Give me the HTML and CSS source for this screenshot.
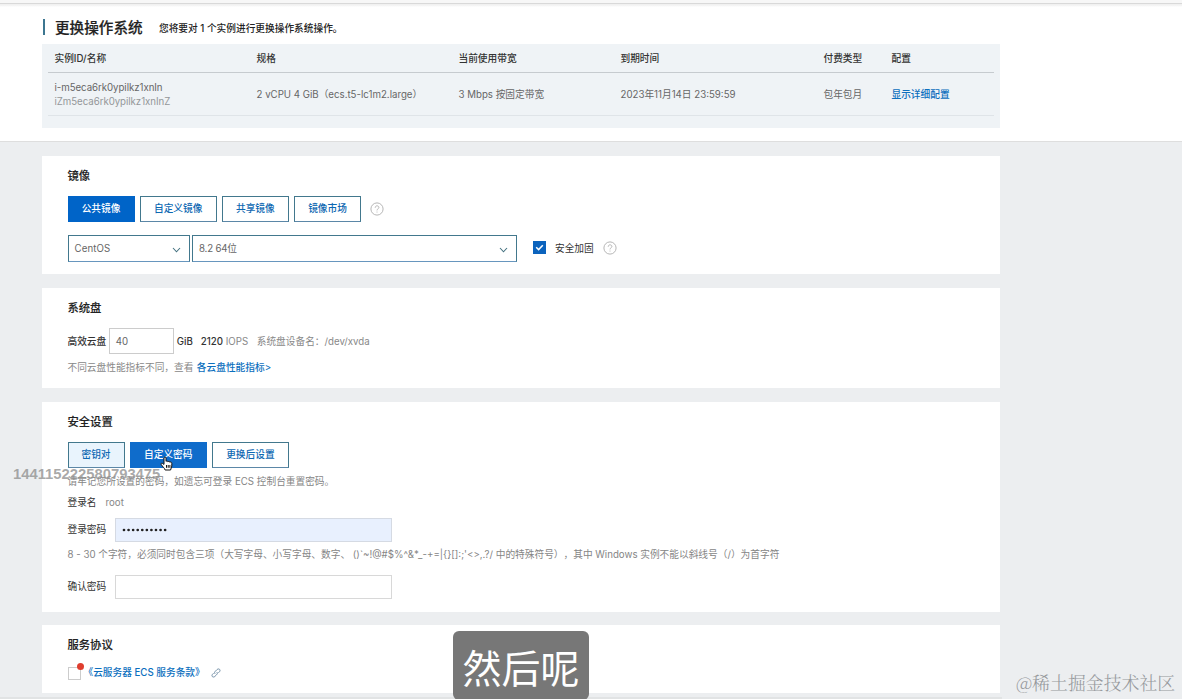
FILE: index.html
```html
<!DOCTYPE html>
<html lang="zh-CN">
<head>
<meta charset="utf-8">
<title>更换操作系统</title>
<link rel="stylesheet" href="styles.css">
</head>
<body>
<header class="top">
  <div class="heading"><h1>更换操作系统</h1><p class="sub">您将要对 1 个实例进行更换操作系统操作。</p></div>
  <div class="summary">
    <div class="cols thead"><span>实例ID/名称</span><span>规格</span><span>当前使用带宽</span><span>到期时间</span><span>付费类型</span><span>配置</span></div>
    <div class="cols tbody">
      <div class="ids"><div>i-m5eca6rk0ypilkz1xnIn</div><div class="muted">iZm5eca6rk0ypilkz1xnInZ</div></div>
      <span class="spec">2 vCPU 4 GiB（ecs.t5-lc1m2.large）</span><span>3 Mbps 按固定带宽</span><span class="date">2023年11月14日 23:59:59</span><span>包年包月</span><a class="link">显示详细配置</a>
    </div>
  </div>
</header>
<main class="cards">
  <section class="card image-card">
    <h2>镜像</h2>
    <div class="buttons">
      <button class="btn w67 active">公共镜像</button><button class="btn w77">自定义镜像</button><button class="btn w67">共享镜像</button><button class="btn w67">镜像市场</button>
      <svg class="help" viewBox="0 0 14 14"><circle cx="7" cy="7" r="6.1"/><path d="M5.2 5.7C5.2 3.2 8.9 3.3 8.9 5.5C8.9 6.8 7 6.8 7 8.4M7 9.6V10.5"/></svg>
    </div>
    <div class="selects">
      <div class="select os"><span>CentOS</span><svg class="chev" viewBox="0 0 9 6"><path d="M1 1L4.5 4.8L8 1"/></svg></div>
      <div class="select version"><span>8.2 64位</span><svg class="chev" viewBox="0 0 9 6"><path d="M1 1L4.5 4.8L8 1"/></svg></div>
      <svg class="checked" viewBox="0 0 13 13"><rect width="13" height="13"/><path d="M3.2 6.3L5.6 8.6L9.8 4.2"/></svg>
      <span class="harden">安全加固</span>
      <svg class="help" viewBox="0 0 14 14"><circle cx="7" cy="7" r="6.1"/><path d="M5.2 5.7C5.2 3.2 8.9 3.3 8.9 5.5C8.9 6.8 7 6.8 7 8.4M7 9.6V10.5"/></svg>
    </div>
  </section>
  <section class="card disk-card">
    <h2>系统盘</h2>
    <div class="disk"><span class="dark">高效云盘</span><div class="size">40</div><span class="dark gib">GiB</span><span class="dark iops">2120</span><span class="iops-unit">IOPS</span><span class="device">系统盘设备名：/dev/xvda</span></div>
    <div class="disk-note">不同云盘性能指标不同，查看 <a class="link">各云盘性能指标&gt;</a></div>
  </section>
  <section class="card security-card">
    <h2>安全设置</h2>
    <div class="buttons">
      <button class="btn w57 pale">密钥对</button><button class="btn w77 hover">自定义密码</button><button class="btn w77">更换后设置</button>
    </div>
    <p class="remember">请牢记您所设置的密码，如遗忘可登录 ECS 控制台重置密码。</p>
    <div class="login"><span class="dark">登录名</span><span>root</span></div>
    <div class="field"><span class="dark">登录密码</span><div class="input filled"><svg class="dots" viewBox="0 0 45 4"><path d="M2 2H44"/></svg></div></div>
    <p class="rule">8 - 30 个字符，必须同时包含三项（大写字母、小写字母、数字、 <span class="symbols">()`~!@#$%^&amp;*_-+=|{}[]:;'&lt;&gt;,.?/</span> 中的特殊符号），其中 Windows 实例不能以斜线号（/）为首字符</p>
    <div class="field"><span class="dark">确认密码</span><div class="input"></div></div>
  </section>
  <section class="card terms-card">
    <h2>服务协议</h2>
    <div class="agree"><span class="box"><i class="badge"></i></span><a class="link">《云服务器 ECS 服务条款》</a>
      <svg class="chain" viewBox="0 0 10 10"><path d="M4.2 5.9C3.1 4.8 3.5 4.1 4.5 3.1L6.1 1.5C8-.1 10 2 8.5 3.7L7.4 4.8M5.7 4.1C6.8 5.2 6.5 5.8 5.5 6.8L3.9 8.4C2 10.1 0 8 1.5 6.3L2.6 5.2"/></svg>
    </div>
  </section>
</main>
<div class="bottom-line"></div>
<div class="stamp">144115222580793475</div>
<svg class="cursor" viewBox="0 0 13 15"><path d="M4 8V2.1C4 .6 6 .6 6 2.1V5.4C6.5 4.7 7.7 4.9 7.9 5.8C8.5 5.2 9.6 5.4 9.8 6.2C10.7 5.7 11.8 6.2 11.8 7.3V10C11.8 11.7 10.6 12.3 10.6 14H5.1C4.6 12 2.5 10.7 1.2 8.5C.6 7.3 2 6.7 2.8 7.5L4 8.8"/><path d="M6.5 9V11.8M8.2 9V11.8M9.9 9V11.8"/></svg>
<div class="caption">然后呢</div>
<div class="community">@稀土掘金技术社区</div>
</body>
</html>
```
FILE: styles.css
```css
* { box-sizing: border-box; }
body { margin: 0; width: 1182px; height: 699px; overflow: hidden; position: relative; background: #eceef0; font: 9.7px/14px Inter, "Noto Sans CJK SC", sans-serif; color: #666; text-spacing-trim: space-all; }
h1, h2, p { margin: 0; }
.top { height: 142px; padding: 15px 0 0 42px; background: linear-gradient(#f7f7f7 0 3px, #d9d9d9 3px 4px, #f1f1f1 4px 5px, #fff 7px); border-bottom: 1px solid #dedede; }
.heading { display: flex; align-items: center; height: 24px; padding-left: 1px; }
h1 { font: 500 14.6px/16px "Noto Sans CJK SC", sans-serif; color: #222; border-left: 2px solid #3c7690; padding-left: 10px; width: 116px; white-space: nowrap; -webkit-text-stroke: .2px #222; }
.sub { color: #222; font-weight: 500; padding-top: 4px; white-space: nowrap; }
.summary { width: 958px; height: 84px; margin-top: 5px; padding: 0 6px; background: #eff3f6; }
.cols { display: grid; grid-template-columns: 202px 202px 162px 203px 68px 100px; align-items: center; padding-left: 6.5px; white-space: nowrap; }
.thead { height: 29px; padding-top: 2px; border-bottom: 1px solid #c6cbcf; font-weight: 500; color: #333; }
.tbody { height: 43px; padding-top: 1px; border-bottom: 1px solid #dfe4e8; }
.muted { color: #949799; }
.link { color: #0c6fbe; font-weight: 500; }
.ids { letter-spacing: -.05px; }
.cards { display: flex; flex-direction: column; gap: 13px; padding: 14px 0 0 42px; }
.card { width: 958px; background: #fff; padding: 12px 0 0 25.5px; white-space: nowrap; }
h2 { font: 500 11.3px/16px Inter, "Noto Sans CJK SC", sans-serif; color: #222; -webkit-text-stroke: .15px #222; }
.image-card { height: 118px; margin-bottom: 1px; }
.disk-card { height: 100px; margin-bottom: 1px; }
.security-card { height: 210px; }
.terms-card { height: 68px; }
.buttons { display: flex; align-items: flex-start; gap: 5.2px; margin-top: 12px; height: 27px; }
.btn { height: 26px; padding: 0; border: 1px solid #42788d; border-bottom-color: #5b87a7; background: #fff; color: #0e68b2; font: 500 9.7px/14px Inter, "Noto Sans CJK SC", sans-serif; }
.w57 { width: 57px; } .w67 { width: 67px; } .w77 { width: 77px; }
.active { background: #0064c8; border-color: #0064c8; color: #fff; }
.hover { background: #0f6ccb; border-color: #0f6ccb; color: #fff; }
.pale { background: #e9f4fd; }
.help { width: 14px; height: 14px; fill: none; stroke: #b6b6b6; stroke-width: 1; }
.buttons .help { margin: 6px 0 0 4px; }
.selects { display: flex; align-items: center; height: 27px; margin-top: 12px; }
.selects .help, .selects .checked { margin-bottom: 2px; }
.select { display: flex; align-items: center; justify-content: space-between; height: 27px; padding: 0 8px 0 6px; border: 1px solid #42788d; border-bottom-color: #6796be; }
.os { width: 122px; margin-right: 2.5px; letter-spacing: .1px; }
.version { width: 325px; padding-right: 8px; letter-spacing: -.2px; }
.chev { width: 9px; height: 6px; fill: none; stroke: #457281; stroke-width: 1.1; margin-top: 3px; }
.checked { width: 13px; height: 13px; fill: #0b63bd; margin-left: 16px; }
.checked path { fill: none; stroke: #fff; stroke-width: 1.5; }
.harden { color: #333; margin: 0 9px 0 9px; }
.dark { color: #333; }
.disk { display: flex; align-items: center; height: 26px; margin-top: 12px; color: #888; }
.disk > span { padding-top: 1px; }
.disk > .dark { font-weight: 500; }
.size { width: 65px; height: 26px; margin-left: 2.5px; border: 1px solid #ccc; padding: 6px 6px 4px; color: #666; }
.gib { margin-left: 3px; width: 24px; }
.iops { width: 25px; }
.iops-unit { width: 31px; }
.disk-note { margin-top: 7px; color: #888; }
.disk-note .link { margin-left: .7px; }
.remember { margin-top: 6px; color: #858585; }
.login { display: flex; gap: 9px; margin-top: 7px; color: #888; }
.field { display: flex; align-items: center; height: 24px; }
.login + .field { margin-top: 8px; }
.input { width: 276.5px; height: 24px; margin-left: 9px; border: 1px solid #d8d8d8; padding-left: 6px; display: flex; align-items: center; }
.filled { background: #e8f0fe; border-color: #d5dae3; }
.dots { width: 45px; height: 4px; }
.dots path { fill: none; stroke: #222; stroke-width: 2.7; stroke-linecap: round; stroke-dasharray: 0 4.57; }
.rule { margin: 6px 0 13px; color: #858585; }
.agree { display: flex; align-items: center; height: 14px; margin-top: 13px; }
.box { position: relative; width: 13px; height: 13px; border: 1px solid #ccc; margin: 1px 3px 0 0; }
.badge { position: absolute; right: -4px; top: -5px; width: 7px; height: 7px; border-radius: 50%; background: #df3e2e; }
.chain { width: 10px; height: 10px; margin-left: 6px; fill: none; stroke: #64839d; stroke-width: .9; }
.bottom-line { height: 2px; margin-top: 4px; background: #e1e3e4; width: 1002px; }
.stamp { position: absolute; left: 13px; top: 466px; font: bold 14.8px/17px "Liberation Sans", sans-serif; color: rgba(145,145,145,.78); }
.cursor { position: absolute; left: 160px; top: 456px; width: 13px; height: 15px; fill: #fff; stroke: #111; stroke-width: 1; }
.caption { position: absolute; left: 453px; top: 631px; width: 136px; height: 69px; border-radius: 6px; background: #777; color: #fff; text-align: center; font: 39px/71px "Noto Sans CJK SC", sans-serif; }
.community { position: absolute; left: 1016px; top: 670px; font: 300 17.9px/24px "Noto Serif CJK SC", "Noto Sans CJK SC", serif; color: #96999c; white-space: nowrap; }
```
